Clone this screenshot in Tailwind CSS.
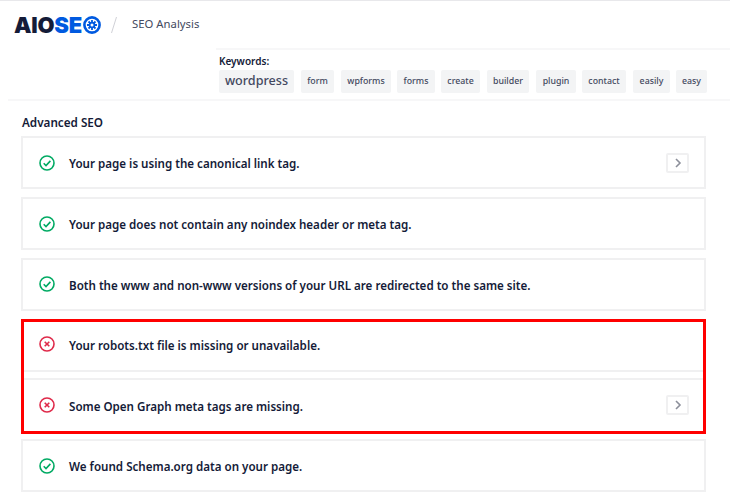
<!DOCTYPE html>
<html>
<head>
<meta charset="utf-8">
<script src="https://cdn.jsdelivr.net/npm/@tailwindcss/browser@4"></script>
</head>
<body class="bg-white">
<div class="relative w-[730px] h-[502px] overflow-hidden bg-white font-['Noto_Sans',sans-serif] text-[#141b38]">
  <div class="h-px bg-[#e8e8eb]"></div>
  <header class="h-[47px] flex items-center pl-[14px]">
    <div class="flex items-center font-['Inter',sans-serif] font-black text-[22px] leading-none tracking-[-0.2px]">
      <span class="text-[#141b38]">AIO</span><span class="text-[#005ae0]">SE</span>
      <svg class="w-[18px] h-[18px] ml-[1px]" viewBox="0 0 18 18" fill="none">
        <circle cx="9" cy="9" r="7.6" stroke="#005ae0" stroke-width="2.6"/>
        <circle cx="9" cy="9" r="3.2" fill="#005ae0"/>
        <path d="M9 4v10M4 9h10M5.5 5.5l7 7M12.5 5.5l-7 7" stroke="#005ae0" stroke-width="1.8"/>
        <circle cx="9" cy="9" r="1.5" fill="#fff"/>
      </svg>
    </div>
    <svg class="w-[8px] h-[18px] ml-[9px]" viewBox="0 0 8 18"><path d="M6.5 1L1.5 17" stroke="#d0d1d7" stroke-width="1"/></svg>
    <span class="ml-[14px] text-[11.3px] text-[#434960]">SEO Analysis</span>
  </header>

  <section class="ml-[216px] h-[51px] border-t-2 border-[#f7f7f8] pl-[3px] pt-[4px]">
    <div class="text-[10px] leading-[14px] font-semibold text-[#141b38]">Keywords:</div>
    <div class="flex items-center mt-[2px]">
      <span class="w-[75px] h-[23px] flex items-center justify-center rounded-[2px] bg-[#f3f4f5] text-[12.6px] font-medium text-[#434960]">wordpress</span>
      <span class="ml-[7px] w-[33px] h-[23px] flex items-center justify-center rounded-[2px] bg-[#f3f4f5] text-[8.8px] font-medium text-[#434960]">form</span>
      <span class="ml-[7px] w-[50px] h-[23px] flex items-center justify-center rounded-[2px] bg-[#f3f4f5] text-[8.8px] font-medium text-[#434960]">wpforms</span>
      <span class="ml-[6px] w-[38px] h-[23px] flex items-center justify-center rounded-[2px] bg-[#f3f4f5] text-[8.8px] font-medium text-[#434960]">forms</span>
      <span class="ml-[6px] w-[39px] h-[23px] flex items-center justify-center rounded-[2px] bg-[#f3f4f5] text-[8.8px] font-medium text-[#434960]">create</span>
      <span class="ml-[7px] w-[42px] h-[23px] flex items-center justify-center rounded-[2px] bg-[#f3f4f5] text-[8.8px] font-medium text-[#434960]">builder</span>
      <span class="ml-[7px] w-[40px] h-[23px] flex items-center justify-center rounded-[2px] bg-[#f3f4f5] text-[8.8px] font-medium text-[#434960]">plugin</span>
      <span class="ml-[6px] w-[44px] h-[23px] flex items-center justify-center rounded-[2px] bg-[#f3f4f5] text-[8.8px] font-medium text-[#434960]">contact</span>
      <span class="ml-[7px] w-[37px] h-[23px] flex items-center justify-center rounded-[2px] bg-[#f3f4f5] text-[8.8px] font-medium text-[#434960]">easily</span>
      <span class="ml-[6px] w-[31px] h-[23px] flex items-center justify-center rounded-[2px] bg-[#f3f4f5] text-[8.8px] font-medium text-[#434960]">easy</span>
    </div>
  </section>

  <div class="ml-[8px] h-[2px] bg-[#f7f7f8]"></div>

  <main class="pl-[21px] w-[706px]">
    <h2 class="mt-[13px] h-[16px] text-[11.7px] leading-[16px] font-semibold text-[#141b38] pl-px">Advanced SEO</h2>
    <div class="mt-[6px] flex flex-col">
      <div class="h-[53px] border-2 border-[#f0f0f1] flex items-center pl-[16px] pr-[15px]">
        <svg class="w-[16px] h-[16px] shrink-0" viewBox="0 0 16 16" fill="none"><circle cx="8" cy="8" r="7" stroke="#00aa63" stroke-width="1.6"/><path d="M4.7 8.2l2.3 2.3 4.4-4.6" stroke="#00aa63" stroke-width="1.6"/></svg>
        <span class="ml-[14px] pt-[2px] text-[11.6px] font-semibold text-[#141b38]">Your page is using the canonical link tag.</span>
        <span class="ml-auto w-[23px] h-[20px] flex items-center justify-center rounded-[2px] border-2 border-[#f0f0f1]"><svg class="w-[8px] h-[10px]" viewBox="0 0 8 10" fill="none"><path d="M2 1l4 4-4 4" stroke="#8c8f9a" stroke-width="1.6"/></svg></span>
      </div>
      <div class="mt-[8px] h-[53px] border-2 border-[#f0f0f1] flex items-center pl-[16px] pr-[15px]">
        <svg class="w-[16px] h-[16px] shrink-0" viewBox="0 0 16 16" fill="none"><circle cx="8" cy="8" r="7" stroke="#00aa63" stroke-width="1.6"/><path d="M4.7 8.2l2.3 2.3 4.4-4.6" stroke="#00aa63" stroke-width="1.6"/></svg>
        <span class="ml-[14px] pt-[2px] text-[11.6px] font-semibold text-[#141b38]">Your page does not contain any noindex header or meta tag.</span>
      </div>
      <div class="mt-[8px] h-[53px] border-2 border-[#f0f0f1] flex items-center pl-[16px] pr-[15px] pb-[1px]">
        <svg class="w-[16px] h-[16px] shrink-0" viewBox="0 0 16 16" fill="none"><circle cx="8" cy="8" r="7" stroke="#00aa63" stroke-width="1.6"/><path d="M4.7 8.2l2.3 2.3 4.4-4.6" stroke="#00aa63" stroke-width="1.6"/></svg>
        <span class="ml-[14px] pt-[3px] text-[11.6px] font-semibold text-[#141b38]">Both the www and non-www versions of your URL are redirected to the same site.</span>
      </div>
      <div class="mt-[8px] h-[53px] border-2 border-[#f0f0f1] flex items-center pl-[16px] pr-[15px] pb-[3px]">
        <svg class="w-[16px] h-[16px] shrink-0" viewBox="0 0 16 16" fill="none"><circle cx="8" cy="8" r="7" stroke="#df2a4a" stroke-width="1.6"/><path d="M5.7 5.7l4.6 4.6M10.3 5.7l-4.6 4.6" stroke="#df2a4a" stroke-width="1.6"/></svg>
        <span class="ml-[14px] pt-[3px] text-[11.6px] font-semibold text-[#141b38]">Your robots.txt file is missing or unavailable.</span>
      </div>
      <div class="mt-[6px] h-[55px] border-2 border-[#f0f0f1] flex items-center pl-[16px] pr-[15px] pb-[2px]">
        <svg class="w-[16px] h-[16px] shrink-0" viewBox="0 0 16 16" fill="none"><circle cx="8" cy="8" r="7" stroke="#df2a4a" stroke-width="1.6"/><path d="M5.7 5.7l4.6 4.6M10.3 5.7l-4.6 4.6" stroke="#df2a4a" stroke-width="1.6"/></svg>
        <span class="ml-[14px] pt-[4px] text-[11.6px] font-semibold text-[#141b38]">Some Open Graph meta tags are missing.</span>
        <span class="ml-auto w-[23px] h-[20px] flex items-center justify-center rounded-[2px] border-2 border-[#f0f0f1]"><svg class="w-[8px] h-[10px]" viewBox="0 0 8 10" fill="none"><path d="M2 1l4 4-4 4" stroke="#8c8f9a" stroke-width="1.6"/></svg></span>
      </div>
      <div class="mt-[6px] h-[53px] border-2 border-[#f0f0f1] flex items-center pl-[16px] pr-[15px]">
        <svg class="w-[16px] h-[16px] shrink-0" viewBox="0 0 16 16" fill="none"><circle cx="8" cy="8" r="7" stroke="#00aa63" stroke-width="1.6"/><path d="M4.7 8.2l2.3 2.3 4.4-4.6" stroke="#00aa63" stroke-width="1.6"/></svg>
        <span class="ml-[14px] pt-[2px] text-[11.6px] font-semibold text-[#141b38]">We found Schema.org data on your page.</span>
      </div>
    </div>
  </main>

  <div class="absolute left-[21px] top-[319px] w-[685px] h-[115px] border-[3px] border-[#ff0000]"></div>
</div>
</body>
</html>
